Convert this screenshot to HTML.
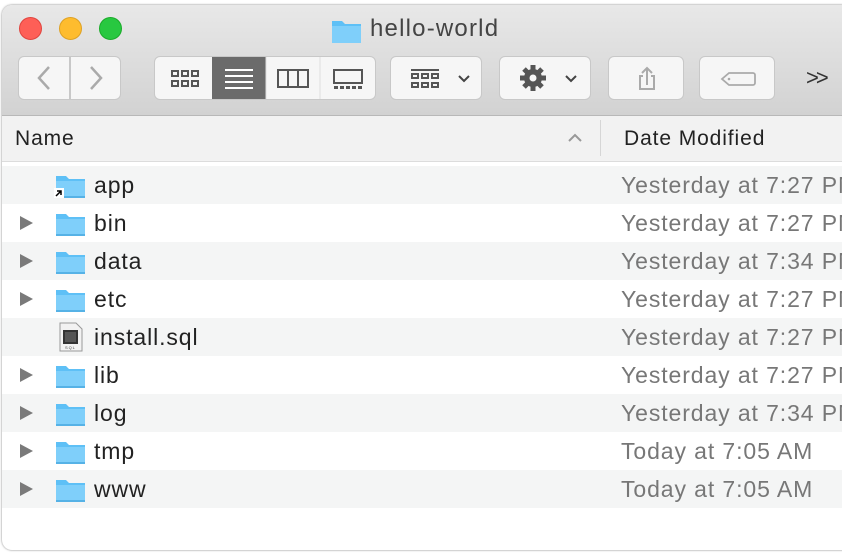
<html><head><style>
body{margin:0;width:842px;height:556px;overflow:hidden;background:#fff;font-family:"Liberation Sans",sans-serif;position:relative}
.win{position:absolute;left:2px;top:5px;width:850px;height:545px;background:#fff;border-radius:10px;overflow:hidden;box-shadow:0 0 2px rgba(0,0,0,.5)}
.tb{position:absolute;left:0;top:0;right:0;height:110px;background:linear-gradient(#e8e8e8,#d2d2d2);border-bottom:1px solid #b8b8b8}
.dot{position:absolute;top:12px;width:23px;height:23px;border-radius:50%}
.btn{position:absolute;top:51px;height:44px;background:#f6f6f6;border:1px solid #c8c8c8;border-radius:6px;box-sizing:border-box}
.hdr{position:absolute;top:111px;left:0;right:0;height:45px;background:#f2f2f2;border-bottom:1px solid #dcdcdc;font-size:21px;color:#222;letter-spacing:0.9px}
.row{position:absolute;left:0;right:0;height:38px;font-size:23px;color:#222;letter-spacing:0.9px}
.row.g{background:#f4f5f5}
.row .n{position:absolute;left:92px;top:6px}
.row .d{position:absolute;left:619px;top:6px;color:#777;white-space:nowrap}
.tri{position:absolute;left:18px;top:12px;width:0;height:0;border-left:13px solid #7a7a7a;border-top:7px solid transparent;border-bottom:7px solid transparent}
.fold{position:absolute;left:53px;top:7px}
</style></head><body>
<div class="win">
<div class="tb">
<div class="dot" style="left:17px;background:#fe5f57;border:1px solid #e0443e;box-sizing:border-box"></div>
<div class="dot" style="left:57px;background:#febc2e;border:1px solid #dea123;box-sizing:border-box"></div>
<div class="dot" style="left:97px;background:#28c840;border:1px solid #1aab29;box-sizing:border-box"></div>
<svg style="position:absolute;left:329px;top:13px" width="31" height="26"><path d="M1 3 h10 l3 3 h16 v19 h-29z" fill="#5ec0f6"/><rect x="1" y="8" width="29" height="17" fill="#7fcffa"/></svg>
<div style="position:absolute;left:368px;top:10px;font-size:24px;color:#444;letter-spacing:1.2px">hello-world</div>
<div class="btn" style="left:16px;width:52px;border-radius:6px 0 0 6px"><svg width="50" height="42"><path d="M30 10 L20 21 L30 32" stroke="#aaa" stroke-width="2.5" fill="none"/></svg></div>
<div class="btn" style="left:68px;width:51px;border-radius:0 6px 6px 0"><svg width="50" height="42"><path d="M20 10 L30 21 L20 32" stroke="#aaa" stroke-width="2.5" fill="none"/></svg></div>
<div class="btn" style="left:152px;width:222px;overflow:hidden">
<svg width="222" height="42" style="position:absolute;left:-1px;top:0">
<g fill="none" stroke="#555" stroke-width="2"><rect x="18" y="14" width="6" height="5"/><rect x="28" y="14" width="6" height="5"/><rect x="38" y="14" width="6" height="5"/><rect x="18" y="24" width="6" height="5"/><rect x="28" y="24" width="6" height="5"/><rect x="38" y="24" width="6" height="5"/></g>
<rect x="58" y="0" width="54" height="44" fill="#6b6b6b"/>
<g stroke="#fff" stroke-width="2"><path d="M71 13h28M71 19h28M71 25h28M71 31h28"/></g>
<g fill="none" stroke="#555" stroke-width="2"><rect x="124" y="13" width="30" height="17"/><path d="M134 13v17M144 13v17"/><rect x="180" y="13" width="28" height="13"/></g>
<path d="M112 0v44M166 0v44" stroke="#ddd"/>
<g fill="#555"><rect x="180" y="29" width="4" height="3"/><rect x="186" y="29" width="4" height="3"/><rect x="192" y="29" width="4" height="3"/><rect x="198" y="29" width="4" height="3"/><rect x="204" y="29" width="4" height="3"/></g>
</svg></div>
<div class="btn" style="left:388px;width:92px"><svg width="92" height="42"><path d="M20 13h28" stroke="#555" stroke-width="2"/><g fill="none" stroke="#555" stroke-width="2"><rect x="21" y="17" width="6" height="4"/><rect x="31" y="17" width="6" height="4"/><rect x="41" y="17" width="6" height="4"/><rect x="21" y="26" width="6" height="4"/><rect x="31" y="26" width="6" height="4"/><rect x="41" y="26" width="6" height="4"/></g><path d="M68 19l5 5 5-5" stroke="#444" stroke-width="2" fill="none"/></svg></div>
<div class="btn" style="left:497px;width:92px"><svg width="92" height="42"><g transform="translate(33,21)"><circle r="9" fill="#555"/><g stroke="#555" stroke-width="5"><path d="M0-13v26M-13 0h26M-9-9l18 18M9-9l-18 18"/></g><circle r="3.5" fill="#f6f6f6"/></g><path d="M66 19l5 5 5-5" stroke="#444" stroke-width="2" fill="none"/></svg></div>
<div class="btn" style="left:606px;width:76px"><svg width="76" height="42"><path d="M33 16l5-5 5 5M38 11v17M34 19h-3v13h14v-13h-3" stroke="#aaa" stroke-width="2" fill="none"/></svg></div>
<div class="btn" style="left:697px;width:76px"><svg width="76" height="42"><path d="M29 16h24a2 2 0 0 1 2 2v8a2 2 0 0 1-2 2h-24l-7-6z" stroke="#aaa" stroke-width="1.8" fill="none"/><circle cx="29" cy="22" r="1.3" fill="#aaa"/></svg></div>
<div style="position:absolute;left:804px;top:60px;font-size:22px;color:#333;letter-spacing:-3px">&gt;&gt;</div>
</div>
<div class="hdr"><span style="position:absolute;left:13px;top:11px">Name</span>
<svg style="position:absolute;left:565px;top:17px" width="16" height="10"><path d="M2 8l6-6 6 6" stroke="#999" stroke-width="2" fill="none"/></svg>
<div style="position:absolute;left:598px;top:4px;width:1px;height:36px;background:#d6d6d6"></div>
<span style="position:absolute;left:622px;top:11px">Date Modified</span></div>
<div id="rows"></div>
</div>
<script>
var r=[["app","Yesterday at 7:27 PM",0],["bin","Yesterday at 7:27 PM",1],["data","Yesterday at 7:34 PM",1],["etc","Yesterday at 7:27 PM",1],["install.sql","Yesterday at 7:27 PM",2],["lib","Yesterday at 7:27 PM",1],["log","Yesterday at 7:34 PM",1],["tmp","Today at 7:05 AM",1],["www","Today at 7:05 AM",1]];
var h="";
var f='<svg class="fold" width="31" height="26"><path d="M1 3 h10 l3 3 h16 v19 h-29z" fill="#5ec0f6"/><rect x="1" y="8" width="29" height="17" fill="#7fcffa"/><rect x="1" y="23" width="29" height="2" fill="#56b2e6"/></svg>';
r.forEach(function(x,i){
var ic=x[2]==2?'<svg class="fold" width="31" height="30" style="top:4px"><path d="M5 1h16l6 6v22h-22z" fill="#f2f2f2" stroke="#999"/><rect x="8" y="8" width="15" height="14" fill="#333"/><rect x="10" y="10" width="11" height="10" fill="#555"/><text x="10" y="27" font-size="4" fill="#444">SQL</text></svg>':f+(x[2]==0?'<svg style="position:absolute;left:52px;top:22px" width="10" height="10"><rect width="10" height="10" fill="#fff"/><path d="M2 8l5-5M3 3h4v4" stroke="#000" stroke-width="1.5" fill="none"/></svg>':'');
h+='<div class="row'+(i%2==0?' g':'')+'" style="top:'+(161+38*i)+'px">'+(x[2]==1?'<div class="tri"></div>':'')+ic+'<span class="n">'+x[0]+'</span><span class="d">'+x[1]+'</span></div>';});
document.getElementById("rows").innerHTML=h;
</script>
</body></html>
